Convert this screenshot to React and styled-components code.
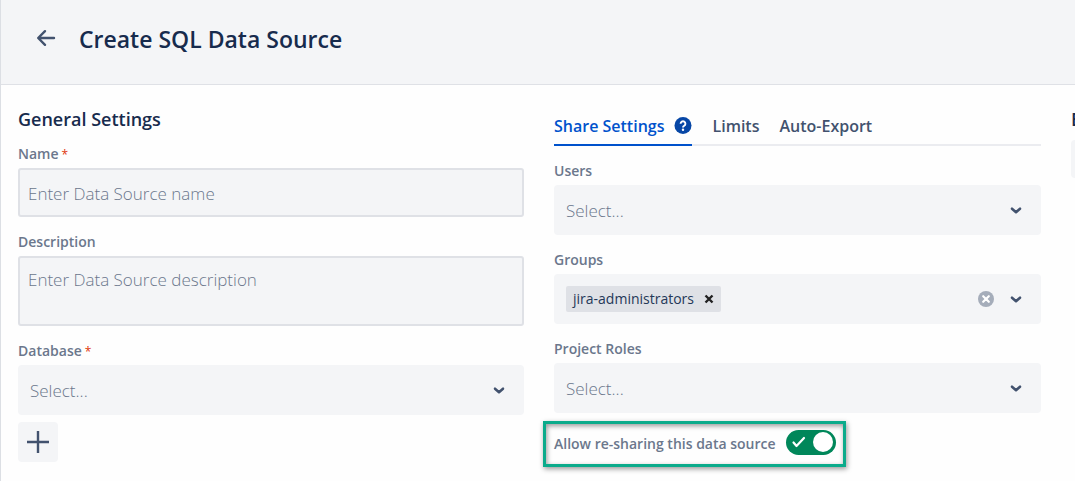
import React, { useState } from 'react';
import styled, { createGlobalStyle } from 'styled-components';

const GlobalStyle = createGlobalStyle`
    *,
    *::before,
    *::after {
        box-sizing: border-box;
    }

    body {
        background: #fefefe;
        color: #172b4d;
        font-family: 'Open Sans', 'Noto Sans', sans-serif;
        margin: 0;
    }

    button,
    input,
    select,
    textarea {
        font-family: inherit;
    }
`;

const Page = styled('div')`
    border-left: 1px solid #dcdfe4;
    min-height: 100vh;
    overflow: hidden;
`;

const Header = styled('header')`
    align-items: center;
    background: #f4f5f7;
    border-bottom: 1px solid #dfe1e6;
    display: flex;
    gap: 18px;
    height: 85px;
    padding: 0 30px 6px;
`;

const IconButton = styled('button')`
    align-items: center;
    background: transparent;
    border: 0;
    color: ${({ $color }) => $color || '#42526e'};
    cursor: pointer;
    display: flex;
    flex: none;
    height: ${({ $size }) => $size}px;
    justify-content: center;
    padding: 0;
    width: ${({ $size }) => $size}px;
`;

const Title = styled('h1')`
    font-size: 23px;
    font-weight: 600;
    line-height: 32px;
    margin: 0;
`;

/* the last column runs past the right edge of the window */
const Columns = styled('form')`
    column-gap: 30px;
    display: grid;
    grid-template-columns: 506fr 487fr 487fr;
    margin-right: -483px;
    padding-left: 17px;
`;

const Column = styled('section')`
    display: flex;
    flex-direction: column;
    min-width: 0;
    padding-top: ${({ $top }) => $top}px;
`;

const Heading = styled('h2')`
    font-size: 18px;
    font-weight: 600;
    line-height: 24px;
    margin: 0;
`;

const Field = styled('div')`
    display: flex;
    flex-direction: column;
    gap: 5px;
    padding-top: ${({ $top }) => $top || 16}px;
`;

const Label = styled('label')`
    color: #6b778c;
    font-size: 14px;
    font-weight: 600;
    line-height: 18px;
`;

const Required = styled('span')`
    color: #de350b;
    font-size: 12px;
    font-weight: 400;
    line-height: 12px;
    padding-left: 3px;
`;

const TextInput = styled('input')`
    background: #f4f5f7;
    border: 2px solid #dfe1e6;
    border-radius: 3px;
    color: #172b4d;
    display: block;
    font-size: 17px;
    font-weight: 300;
    height: 49px;
    line-height: 24px;
    outline: 0;
    padding: 2px 8px 0;
    width: 100%;

    &::placeholder {
        color: #6b778c;
        opacity: 1;
    }
`;

const TextArea = styled(TextInput)`
    height: 70px;
    padding: 10px 8px;
    resize: none;
`;

const SelectBox = styled('div')`
    align-items: center;
    background: #f4f5f7;
    border-radius: 4px;
    color: #42526e;
    display: grid;
    height: 50px;

    & > * {
        grid-area: 1 / 1;
    }

    & > svg {
        justify-self: end;
        margin-right: 12px;
        pointer-events: none;
    }
`;

const NativeSelect = styled('select')`
    appearance: none;
    background: transparent;
    border: 0;
    color: #6b778c;
    font-size: 17px;
    font-weight: 300;
    height: 50px;
    outline: 0;
    padding: 0 40px 0 12px;
    width: 100%;
`;

const MultiSelect = styled('div')`
    align-items: center;
    background: #f4f5f7;
    border-radius: 4px;
    display: flex;
    gap: 5px;
    height: 50px;
    padding: 0 12px;
`;

const Tag = styled('span')`
    align-items: center;
    background: #dfe1e6;
    border-radius: 2px;
    color: #253858;
    display: flex;
    font-size: 14px;
    gap: 7px;
    height: 26px;
    line-height: 26px;
    padding: 0 4px 0 7px;
`;

const BareInput = styled('input')`
    background: transparent;
    border: 0;
    flex: 1;
    font-size: 17px;
    min-width: 0;
    outline: 0;
    padding: 0;
`;

const AddButton = styled('button')`
    align-items: center;
    background: #f4f5f7;
    border: 0;
    border-radius: 4px;
    color: #42526e;
    cursor: pointer;
    display: flex;
    height: 40px;
    justify-content: center;
    margin-top: 7px;
    padding: 0;
    width: 40px;
`;

const Tabs = styled('div')`
    box-shadow: inset 0 -2px 0 #ebecf0;
    display: flex;
    gap: 20px;
    height: 38px;
`;

const Tab = styled('button')`
    align-items: center;
    background: transparent;
    border: 0;
    border-bottom: 2px solid
        ${({ $active }) => ($active ? '#0052cc' : 'transparent')};
    color: ${({ $active }) => ($active ? '#0052cc' : '#42526e')};
    cursor: pointer;
    display: flex;
    font-size: 16px;
    font-weight: 600;
    gap: 10px;
    line-height: 24px;
    padding: 0;
`;

const Highlight = styled('div')`
    align-items: center;
    align-self: flex-start;
    border: 3px solid #0bab8b;
    box-shadow:
        1px 2px 5px rgba(0, 0, 0, 0.4),
        inset 1px 2px 5px rgba(0, 0, 0, 0.4);
    display: flex;
    gap: 10px;
    height: 46px;
    margin: 8px 0 0 -11px;
    padding: 0 7px 0 8px;
`;

const Toggle = styled('span')`
    background: #00875a;
    border-radius: 13px;
    display: grid;
    height: 25px;
    margin-bottom: 3px;
    width: 50px;

    & > * {
        grid-area: 1 / 1;
    }
`;

const ToggleInput = styled('input')`
    cursor: pointer;
    height: 25px;
    margin: 0;
    opacity: 0;
    width: 50px;
`;

const SideBox = styled('div')`
    background: #f4f5f7;
    border-radius: 4px;
    height: 38px;
    margin-top: 9px;
`;

const Chevron = () => (
    <svg width="26" height="26" viewBox="0 0 26 26" fill="none">
        <path
            d="M9 11.7l4 3.6 4-3.6"
            stroke="#42526e"
            strokeWidth="2.5"
            strokeLinecap="round"
            strokeLinejoin="round"
        />
    </svg>
);

const SelectField = ({ id, label, required, top }) => (
    <Field $top={top}>
        <Label htmlFor={id}>
            {label}
            {required && <Required>*</Required>}
        </Label>
        <SelectBox>
            <NativeSelect id={id} defaultValue="">
                <option value="">Select...</option>
            </NativeSelect>
            <Chevron />
        </SelectBox>
    </Field>
);

const App = () => {
    const [tab, setTab] = useState('share');
    const [groups, setGroups] = useState(['jira-administrators']);
    const [isShared, setIsShared] = useState(true);

    return (
        <Page>
            <GlobalStyle />
            <Header>
                <IconButton $size={30} aria-label="Back">
                    <svg width="30" height="30" viewBox="0 0 30 30" fill="none">
                        <path
                            d="M23 14H7.5M14 7.2L7.2 14l6.8 6.8"
                            stroke="currentColor"
                            strokeWidth="2.4"
                            strokeLinecap="round"
                            strokeLinejoin="round"
                        />
                    </svg>
                </IconButton>
                <Title>Create SQL Data Source</Title>
            </Header>

            <Columns onSubmit={(e) => e.preventDefault()}>
                <Column $top={22}>
                    <Heading>General Settings</Heading>
                    <Field $top={14}>
                        <Label htmlFor="name">
                            Name<Required>*</Required>
                        </Label>
                        <TextInput id="name" placeholder="Enter Data Source name" />
                    </Field>
                    <Field>
                        <Label htmlFor="description">Description</Label>
                        <TextArea
                            as="textarea"
                            id="description"
                            placeholder="Enter Data Source description"
                        />
                    </Field>
                    <SelectField id="database" label="Database" required />
                    <AddButton type="button" aria-label="Add database">
                        <svg width="24" height="24" viewBox="0 0 24 24">
                            <path
                                d="M12 1v22M1 12h22"
                                stroke="currentColor"
                                strokeWidth="2.4"
                            />
                        </svg>
                    </AddButton>
                </Column>

                <Column $top={23}>
                    <Tabs role="tablist">
                        <Tab
                            type="button"
                            role="tab"
                            aria-selected={tab === 'share'}
                            $active={tab === 'share'}
                            onClick={() => setTab('share')}
                        >
                            Share Settings
                            <svg width="18" height="18" viewBox="0 0 18 18" fill="none">
                                <circle cx="9" cy="8.5" r="8.5" fill="#0747a6" />
                                <path
                                    d="M6.6 6.7a2.4 2.4 0 1 1 3.6 2.1c-.8.5-1.2.8-1.2 1.6"
                                    stroke="#fff"
                                    strokeWidth="1.9"
                                />
                                <circle cx="9" cy="12.7" r="1.2" fill="#fff" />
                            </svg>
                        </Tab>
                        <Tab
                            type="button"
                            role="tab"
                            aria-selected={tab === 'limits'}
                            $active={tab === 'limits'}
                            onClick={() => setTab('limits')}
                        >
                            Limits
                        </Tab>
                        <Tab
                            type="button"
                            role="tab"
                            aria-selected={tab === 'export'}
                            $active={tab === 'export'}
                            onClick={() => setTab('export')}
                        >
                            Auto-Export
                        </Tab>
                    </Tabs>
                    <SelectField id="users" label="Users" />
                    <Field>
                        <Label htmlFor="groups">Groups</Label>
                        <MultiSelect>
                            {groups.map((group) => (
                                <Tag key={group}>
                                    {group}
                                    <IconButton
                                        type="button"
                                        $size={16}
                                        $color="#222"
                                        aria-label={`Remove ${group}`}
                                        onClick={() =>
                                            setGroups(groups.filter((g) => g !== group))
                                        }
                                    >
                                        <svg width="10" height="10" viewBox="0 0 10 10">
                                            <path
                                                d="M1.5 1.5l7 7M8.5 1.5l-7 7"
                                                stroke="currentColor"
                                                strokeWidth="2.4"
                                            />
                                        </svg>
                                    </IconButton>
                                </Tag>
                            ))}
                            <BareInput id="groups" />
                            <IconButton
                                type="button"
                                $size={24}
                                $color="#a5adba"
                                aria-label="Clear groups"
                                onClick={() => setGroups([])}
                            >
                                <svg width="16" height="16" viewBox="0 0 16 16">
                                    <circle cx="8" cy="8" r="8" fill="currentColor" />
                                    <path
                                        d="M5.2 5.2l5.6 5.6M10.8 5.2l-5.6 5.6"
                                        stroke="#fff"
                                        strokeWidth="2.2"
                                        strokeLinecap="round"
                                    />
                                </svg>
                            </IconButton>
                            <IconButton type="button" $size={26} aria-label="Open groups">
                                <Chevron />
                            </IconButton>
                        </MultiSelect>
                    </Field>
                    <SelectField id="roles" label="Project Roles" />
                    <Highlight>
                        <Label htmlFor="resharing">
                            Allow re-sharing this data source
                        </Label>
                        <Toggle>
                            <svg width="50" height="25" viewBox="0 0 50 25" fill="none">
                                <circle cx={isShared ? 37 : 13} cy="12" r="10" fill="#fff" />
                                {isShared && (
                                    <path
                                        d="M7.5 12.5l3 3.5 7.5-8"
                                        stroke="#fff"
                                        strokeWidth="2.2"
                                        strokeLinecap="round"
                                        strokeLinejoin="round"
                                    />
                                )}
                            </svg>
                            <ToggleInput
                                id="resharing"
                                type="checkbox"
                                checked={isShared}
                                onChange={() => setIsShared(!isShared)}
                            />
                        </Toggle>
                    </Highlight>
                </Column>

                <Column $top={22}>
                    <Heading>E</Heading>
                    <SideBox />
                </Column>
            </Columns>
        </Page>
    );
};

export default App;
